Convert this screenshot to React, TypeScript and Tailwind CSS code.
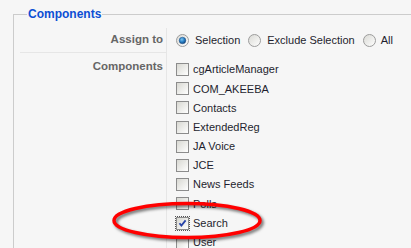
const components = [
  { name: "cgArticleManager", checked: false },
  { name: "COM_AKEEBA", checked: false },
  { name: "Contacts", checked: false },
  { name: "ExtendedReg", checked: false },
  { name: "JA Voice", checked: false },
  { name: "JCE", checked: false },
  { name: "News Feeds", checked: false },
  { name: "Polls", checked: false },
  { name: "Search", checked: true },
  { name: "User", checked: false }
];

const Radio = ({ checked }: { checked?: boolean }) => (
  <svg viewBox="0 0 13 13" className="h-[13px] w-[13px] shrink-0">
    <defs>
      <linearGradient id="rface" x1="0" y1="0" x2="1" y2="1">
        <stop offset="0" stopColor="#d9d9d4" />
        <stop offset="1" stopColor="#ffffff" />
      </linearGradient>
      <radialGradient id="rdot" cx="0.4" cy="0.35" r="0.7">
        <stop offset="0" stopColor="#7fc3ee" />
        <stop offset="0.5" stopColor="#2a83c8" />
        <stop offset="1" stopColor="#0d3c73" />
      </radialGradient>
    </defs>
    <circle cx="6.5" cy="6.5" r="6" fill="url(#rface)" stroke="#9c9c9c" strokeWidth="1" />
    {checked ? <circle cx="6.5" cy="6.5" r="3.3" fill="url(#rdot)" stroke="#1d4f86" strokeWidth="0.5" /> : null}
  </svg>
);

const Checkbox = ({ checked }: { checked?: boolean }) => (
  <div className={checked ? "outline-1 outline-dotted outline-[#555]" : ""}>
    <div className="h-[13px] w-[13px] border border-[#8c8c8c] bg-gradient-to-br from-[#d8d8d2] to-white">
      {checked ? (
        <svg viewBox="0 0 11 11" className="h-[11px] w-[11px]">
          <path d="M2.5 5.2 4.4 7.6 8.6 2.4" fill="none" stroke="#2743a8" strokeWidth="1.8" />
        </svg>
      ) : null}
    </div>
  </div>
);

export default function App() {
  return (
    <div className="relative h-[248px] w-[411px] overflow-hidden bg-[#f6f6f6] font-['Liberation_Sans',Arial,sans-serif]">
      <div className="pl-[13px] pt-[7px]">
        <fieldset className="border-l border-t border-[#cccccc] pl-[6px] pt-[7px]">
          <legend className="ml-[7px] px-[1px] text-[12px] font-bold leading-[14px] text-[#0d4fd4]">
            Components
          </legend>

          <div className="flex">
            <div className="h-[25px] w-[147px] shrink-0 border-b border-r border-[#e6e6e6] pr-[3px] pt-[4px] text-right text-[11.5px] font-bold leading-[14px] text-[#666666]">
              Assign to
            </div>
            <div className="flex h-[24px] items-center pl-[9px] text-[11px] text-[#1e1e2e]">
              <Radio checked />
              <span className="ml-[6px]">Selection</span>
              <span className="ml-[8px]">
                <Radio />
              </span>
              <span className="ml-[6px]">Exclude Selection</span>
              <span className="ml-[8px]">
                <Radio />
              </span>
              <span className="ml-[5px]">All</span>
            </div>
          </div>

          <div className="flex">
            <div className="w-[147px] shrink-0 border-r border-[#e6e6e6] pr-[3px] pt-[6px] text-right text-[11.5px] font-bold leading-[14px] text-[#666666]">
              Components
            </div>
            <div className="pl-[9px] pt-[7px] text-[11px] text-[#1e1e2e]">
              {components.map((c) => (
                <div key={c.name} className="flex h-[19.2px] items-center gap-[4px]">
                  <Checkbox checked={c.checked} />
                  <span>{c.name}</span>
                </div>
              ))}
            </div>
          </div>
        </fieldset>
      </div>

      <svg
        className="pointer-events-none absolute left-0 top-0 h-[248px] w-[411px] drop-shadow-[2px_2px_1.5px_rgba(0,0,0,0.55)]"
        viewBox="0 0 411 248"
      >
        <ellipse cx="187" cy="220.5" rx="73" ry="17" fill="none" stroke="#ff0000" strokeWidth="3.5" />
      </svg>
    </div>
  );
}
